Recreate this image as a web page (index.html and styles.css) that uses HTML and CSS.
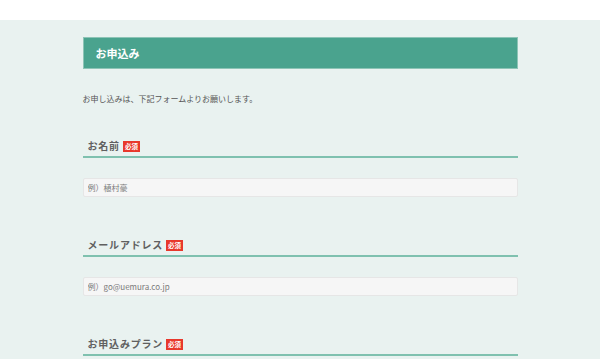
FILE: index.html
```html
<!DOCTYPE html>
<html lang="ja">
<head>
    <meta charset="UTF-8">
    <meta name="viewport" content="width=device-width, initial-scale=1.0">
    <title>お申込み</title>
    <link rel="stylesheet" href="styles.css">
</head>
<body>

    <div class="topbar"></div>

    <div class="content">
        <h2 class="page-title">お申込み</h2>
        <p class="lead">お申し込みは、下記フォームよりお願いします。</p>

        <form class="entry-form">
            <div class="field">
                <h3 class="field-label">お名前<span class="required">必須</span></h3>
                <input type="text" class="field-input" placeholder="例）植村豪">
            </div>

            <div class="field">
                <h3 class="field-label">メールアドレス<span class="required">必須</span></h3>
                <input type="email" class="field-input" placeholder="例）go@uemura.co.jp">
            </div>

            <div class="field">
                <h3 class="field-label">お申込みプラン<span class="required">必須</span></h3>
            </div>
        </form>
    </div>

</body>
</html>
```

FILE: styles.css
```css
* {
    margin: 0;
    padding: 0;
    box-sizing: border-box;
}

body {
    font-family: "Noto Sans CJK JP", "Noto Sans", sans-serif;
    background-color: #e9f2f0; /* fondo verde claro */
    color: #555555;
}

.topbar {
    height: 20px;
    background-color: #ffffff;
}

.content {
    width: 435px;
    margin: 0 auto;
}

/* Barra del título */
.page-title {
    margin-top: 17px;
    height: 32px;
    display: flex;
    align-items: center;
    padding-left: 12px;
    background-color: #4aa38e;
    border: 1px solid #8dc4b6;
    color: #ffffff;
    font-size: 11px;
    font-weight: bold;
}

.lead {
    margin-top: 24px;
    font-size: 8px;
    line-height: 12px;
    color: #555555;
}

/* Campos del formulario */
.field {
    margin-top: 34px;
}

.field + .field {
    margin-top: 41px;
}

.field-label {
    display: flex;
    align-items: center;
    box-sizing: content-box;
    height: 14px;
    padding-left: 5px;
    padding-bottom: 3px;
    border-bottom: 2px solid #7fc1af;
    font-size: 10px;
    line-height: 14px;
    letter-spacing: 0.8px;
    font-weight: bold;
    color: #606060;
}

.required {
    display: inline-block;
    margin-left: 3px;
    padding: 0 2px;
    height: 11px;
    line-height: 11px;
    background-color: #e8382c;
    color: #ffffff;
    font-size: 6.5px;
    letter-spacing: 0;
}

.field-input {
    display: block;
    width: 100%;
    height: 19px;
    margin-top: 20px;
    padding-left: 4px;
    background-color: #f6f6f6;
    border: 1px solid #e6e6e6;
    border-radius: 2px;
    font-family: inherit;
    font-size: 8px;
    color: #555555;
}

.field-input::placeholder {
    color: #7a7a7a;
}
```
